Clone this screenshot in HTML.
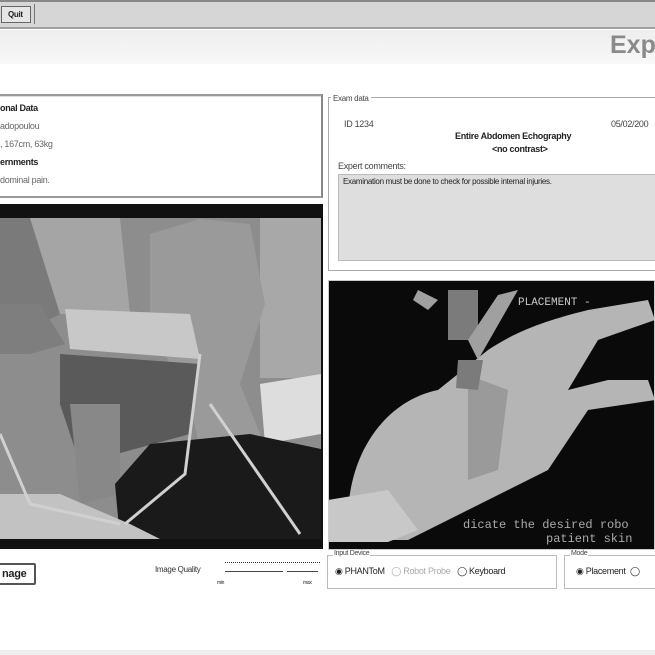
<!DOCTYPE html>
<html><head><style>
*{margin:0;padding:0;box-sizing:border-box}
body{width:655px;height:655px;overflow:hidden;background:#fff;font-family:"Liberation Sans",sans-serif;position:relative;color:#222}
.a{position:absolute}
.t{font-size:9px;white-space:nowrap;letter-spacing:-0.3px}
</style></head><body>
<div class="a" style="left:0;top:0;width:655px;height:29px;background:#d6d6d6;border-top:2px solid #888;border-bottom:2px solid #a0a0a0"></div>
<div class="a t" style="left:1px;top:6px;width:30px;height:17px;border:1px solid #666;background:#e6e6e6;font-size:8px;font-weight:bold;padding:3px 0 0 6px">Quit</div>
<div class="a" style="left:34px;top:4px;width:1px;height:20px;background:#777"></div>
<div class="a" style="left:0;top:30px;width:655px;height:34px;background:linear-gradient(#eee,#f8f8f8)"></div>
<div class="a" style="left:610px;top:31px;font-size:25px;color:#8a8a8a;font-weight:bold">Exp</div>

<div class="a" style="left:-3px;top:94px;width:326px;height:104px;border:2px solid #999;border-right-color:#888;box-shadow:inset 1px 1px 0 #ddd"></div>
<div class="a t" style="left:0;top:103px;font-weight:bold">onal Data</div>
<div class="a t" style="left:0;top:121px;color:#666">adopoulou</div>
<div class="a t" style="left:0;top:139px;color:#666">, 167cm, 63kg</div>
<div class="a t" style="left:0;top:157px;font-weight:bold">ernments</div>
<div class="a t" style="left:0;top:175px;color:#666">dominal pain.</div>

<div class="a" style="left:328px;top:97px;width:330px;height:174px;border:1px solid #aaa"></div>
<div class="a t" style="left:331px;top:94px;background:#fff;font-size:8px;color:#444;padding:0 2px">Exam data</div>
<div class="a t" style="left:344px;top:119px;color:#444">ID 1234</div>
<div class="a t" style="left:611px;top:119px;color:#444">05/02/200</div>
<div class="a t" style="left:455px;top:131px;font-weight:bold">Entire Abdomen Echography</div>
<div class="a t" style="left:492px;top:144px;font-weight:bold">&lt;no contrast&gt;</div>
<div class="a t" style="left:338px;top:161px;color:#444">Expert comments:</div>
<div class="a" style="left:338px;top:174px;width:320px;height:87px;background:#dedede;border:1px solid #bbb"></div>
<div class="a t" style="left:343px;top:177px;font-size:8px">Examination must be done to check for possible internal injuries.</div>

<svg class="a" style="left:0;top:204px" width="323" height="345" viewBox="0 0 323 345">
<rect width="323" height="345" fill="#111"/>
<rect x="0" y="14" width="321" height="321" fill="#8d8d8d"/>
<rect x="260" y="14" width="61" height="160" fill="#a8a8a8"/>
<path d="M0 14 L55 14 L60 110 L0 140Z" fill="#7a7a7a"/>
<path d="M30 14 L120 14 L130 110 L60 110Z" fill="#a5a5a5"/>
<path d="M150 30 L200 15 L250 20 L265 100 L240 180 L260 230 L250 300 L210 290 L190 200 L150 120Z" fill="#9a9a9a"/>
<path d="M0 100 L40 100 L65 140 L30 150 L0 150Z" fill="#7e7e7e"/>
<path d="M65 105 L190 110 L200 155 L70 145Z" fill="#c8c8c8"/>
<path d="M60 150 L200 160 L190 230 L80 260 L60 200Z" fill="#5a5a5a"/>
<path d="M70 200 L120 200 L120 290 L80 300Z" fill="#888"/>
<path d="M260 180 L321 170 L321 230 L265 240Z" fill="#ddd"/>
<path d="M115 280 L150 240 L250 230 L321 245 L321 335 L120 335Z" fill="#1a1a1a"/>
<path d="M0 290 L60 290 L130 320 L160 335 L0 335Z" fill="#c2c2c2"/>
<path d="M0 230 L30 300 L120 320 M200 150 L185 270 L125 320 M210 200 L300 330" stroke="#d0d0d0" stroke-width="3" fill="none"/>
</svg>

<svg class="a" style="left:328px;top:280px" width="327" height="270" viewBox="0 0 327 270">
<rect width="327" height="270" fill="#0a0a0a"/>
<path d="M20 240 C20 170 60 120 110 110 L160 70 C190 50 220 40 260 30 L320 20 L327 40 L270 60 L240 110 L280 100 L320 100 L327 120 L260 130 L220 190 L140 230 L80 260 L20 260Z" fill="#b5b5b5"/>
<path d="M140 95 L180 110 L170 190 L140 200Z" fill="#9a9a9a"/>
<path d="M0 220 L60 210 L90 250 L60 262 L0 262Z" fill="#c8c8c8"/>
<path d="M120 10 L150 10 L150 60 L120 60Z M130 80 L155 80 L150 110 L128 108Z" fill="#7b7b7b"/>
<path d="M90 10 L110 20 L100 30 L85 20Z M170 15 L190 10 L150 80 L140 60Z" fill="#a0a0a0"/>
<text x="190" y="25" fill="#ccc" font-family="Liberation Mono,monospace" font-size="11">PLACEMENT -</text>
<text x="135" y="248" fill="#aaa" font-family="Liberation Mono,monospace" font-size="12">dicate the desired robo</text>
<text x="218" y="262" fill="#aaa" font-family="Liberation Mono,monospace" font-size="12">patient skin</text>
<rect x="0" y="0" width="327" height="270" fill="none" stroke="#ccc" stroke-width="2"/>
</svg>

<div class="a t" style="left:-4px;top:563px;width:40px;height:22px;border:2px solid #555;border-radius:2px;font-weight:bold;font-size:11px;padding:3px 0 0 4px">nage</div>
<div class="a t" style="left:155px;top:565px;font-size:8px;color:#333">Image Quality</div>
<div class="a" style="left:225px;top:562px;width:95px;height:1px;border-top:1px dotted #333"></div>
<div class="a" style="left:225px;top:571px;width:58px;height:1px;background:#444"></div>
<div class="a" style="left:287px;top:571px;width:31px;height:1px;background:#444"></div>
<div class="a t" style="left:217px;top:580px;font-size:5px">min</div>
<div class="a t" style="left:303px;top:580px;font-size:5px">max</div>

<div class="a" style="left:327px;top:555px;width:230px;height:34px;border:1px solid #bbb"></div>
<div class="a t" style="left:333px;top:550px;background:#fff;font-size:7px;color:#444;padding:0 1px">Input Device</div>
<div class="a t" style="left:335px;top:566px">◉ PHANToM&nbsp;&nbsp;&nbsp;<span style="color:#aaa">◯ Robot Probe</span>&nbsp;&nbsp;&nbsp;◯ Keyboard</div>
<div class="a" style="left:564px;top:555px;width:95px;height:34px;border:1px solid #bbb"></div>
<div class="a t" style="left:570px;top:550px;background:#fff;font-size:7px;color:#444;padding:0 1px">Mode</div>
<div class="a t" style="left:576px;top:566px">◉ Placement&nbsp;&nbsp;◯</div>
<div class="a" style="left:0;top:650px;width:655px;height:5px;background:#eee"></div>
</body></html>
